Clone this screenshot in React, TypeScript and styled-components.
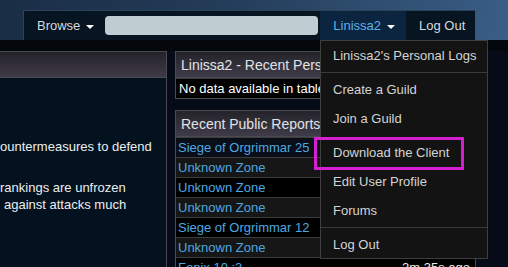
import styled, { createGlobalStyle } from 'styled-components'

const GlobalStyle = createGlobalStyle`
    html, body {
        margin: 0;
        padding: 0;
        background: #050b14;
    }
    body {
        font-family: "Liberation Sans", Arial, sans-serif;
    }
`

type Report = {
    zone: string
    time: string
    bg: string
}

const reports: Report[] = [
    { zone: 'Siege of Orgrimmar 25', time: '1m 2s ago', bg: '#0a0e19' },
    { zone: 'Unknown Zone', time: '1m 10s ago', bg: '#161616' },
    { zone: 'Unknown Zone', time: '1m 24s ago', bg: '#000000' },
    { zone: 'Unknown Zone', time: '1m 40s ago', bg: '#161616' },
    { zone: 'Siege of Orgrimmar 12', time: '2m 3s ago', bg: '#000000' },
    { zone: 'Unknown Zone', time: '2m 20s ago', bg: '#161616' },
    { zone: 'Fonix 10 :3', time: '2m 35s ago', bg: '#000000' },
]

const Page = styled.div`
    position: relative;
    width: 508px;
    height: 267px;
    overflow: hidden;
    background: #050c18;
    font-size: 13px;
`

const Header = styled.div`
    height: 40px;
    box-sizing: border-box;
    padding: 10px 0 0 23px;
    background: linear-gradient(100deg, #1a2d45 0%, #243d5a 45%, #3a5e86 100%);
`

const NavBar = styled.div`
    display: flex;
    align-items: stretch;
    width: 452px;
    height: 30px;
    background: #061521;
    border-top: 1px solid #2c4256;
    border-left: 1px solid #2c4256;
    box-sizing: border-box;
`

const NavItem = styled.div<{ $active?: boolean }>`
    display: flex;
    flex: none;
    align-items: center;
    gap: 6px;
    padding: 0 11px 0 13px;
    color: ${p => (p.$active ? '#5fb2e8' : '#d6dade')};
    background: ${p => (p.$active ? '#0b2440' : 'transparent')};
    white-space: nowrap;
`

const Caret = styled.span`
    width: 0;
    height: 0;
    border-left: 4px solid transparent;
    border-right: 4px solid transparent;
    border-top: 4px solid #ffffff;
    margin-top: 2px;
`

const SearchBox = styled.div`
    align-self: center;
    flex: none;
    width: 213px;
    height: 19px;
    margin-right: 2px;
    border-radius: 4px;
    background: #bdcdd2;
`

const Band = styled.div`
    height: 11px;
    background: #04080c;
`

const Content = styled.div`
    display: grid;
    grid-template-columns: 167px 301px;
    column-gap: 8px;
    height: 216px;
`

const Panel = styled.div`
    border: 1px solid #4a4a52;
    border-bottom: none;
    display: flex;
    flex-direction: column;
    overflow: hidden;
`

const LeftPanel = styled(Panel)`
    border-left: none;
    background: #03121e;
`

const PanelHeader = styled.div`
    height: 26px;
    box-sizing: border-box;
    display: flex;
    align-items: center;
    padding-left: 5px;
    font-size: 14px;
    color: #e2e2e6;
    white-space: nowrap;
    background: linear-gradient(180deg, #242329 0%, #3f3b49 100%);
    border-bottom: 1px solid #4a4a52;
`

const PanelBody = styled.div`
    padding-top: 60px;
    color: #eceef0;
    line-height: 17px;
`

const TextLine = styled.div<{ $indent?: number }>`
    white-space: nowrap;
    padding-left: ${p => p.$indent ?? 0}px;
`

const Spacer = styled.div`
    height: 24px;
`

const RightColumn = styled.div`
    display: flex;
    flex-direction: column;
    gap: 11px;
`

const Table = styled(Panel)`
    border-bottom: 1px solid #4a4a52;
    background: #000000;
`

const TableRow = styled.div<{ $bg: string }>`
    display: flex;
    justify-content: space-between;
    align-items: center;
    height: 20px;
    box-sizing: border-box;
    padding: 0 5px 0 2px;
    background: ${p => p.$bg};
    border-top: 1px solid #3c3c3c;
    white-space: nowrap;
    &:first-of-type {
        border-top: none;
    }
`

const EmptyCell = styled.span`
    color: #ffffff;
    padding-left: 1px;
`

const ZoneCell = styled.span`
    color: #4ea8e0;
`

const TimeCell = styled.span`
    color: #ececec;
`

const Dropdown = styled.div`
    position: absolute;
    left: 320px;
    top: 40px;
    width: 168px;
    height: 219px;
    box-sizing: border-box;
    background: #131313;
    border: 1px solid #3e3e3e;
    display: flex;
    flex-direction: column;
`

const MenuItem = styled.div`
    height: 29px;
    flex-shrink: 0;
    display: flex;
    align-items: center;
    padding-left: 12px;
    color: #d4d4d4;
    white-space: nowrap;
`

const Divider = styled.div<{ $ghost?: boolean }>`
    height: 1px;
    margin: 2px 0;
    flex-shrink: 0;
    background: ${p => (p.$ghost ? 'transparent' : '#3a3a3a')};
`

const Highlight = styled.div`
    position: absolute;
    left: 314px;
    top: 137px;
    width: 150px;
    height: 33px;
    box-sizing: border-box;
    border: 3px solid #d61fcf;
`

const App = () => {
    return (
        <>
            <GlobalStyle />
            <Page>
                <Header>
                    <NavBar>
                        <NavItem>
                            Browse <Caret />
                        </NavItem>
                        <SearchBox />
                        <NavItem $active>
                            Linissa2 <Caret />
                        </NavItem>
                        <NavItem>Log Out</NavItem>
                    </NavBar>
                </Header>
                <Band />
                <Content>
                    <LeftPanel>
                        <PanelHeader />
                        <PanelBody>
                            <TextLine>ountermeasures to defend</TextLine>
                            <Spacer />
                            <TextLine>rankings are unfrozen</TextLine>
                            <TextLine $indent={4}>against attacks much</TextLine>
                        </PanelBody>
                    </LeftPanel>
                    <RightColumn>
                        <Table>
                            <PanelHeader>Linissa2 - Recent Personal Logs</PanelHeader>
                            <TableRow $bg="#000000">
                                <EmptyCell>No data available in table</EmptyCell>
                            </TableRow>
                        </Table>
                        <Table>
                            <PanelHeader>Recent Public Reports</PanelHeader>
                            {reports.map((r, i) => (
                                <TableRow key={i} $bg={r.bg}>
                                    <ZoneCell>{r.zone}</ZoneCell>
                                    <TimeCell>{r.time}</TimeCell>
                                </TableRow>
                            ))}
                        </Table>
                    </RightColumn>
                </Content>
                <Dropdown>
                    <MenuItem>Linissa2's Personal Logs</MenuItem>
                    <Divider />
                    <MenuItem>Create a Guild</MenuItem>
                    <MenuItem>Join a Guild</MenuItem>
                    <Divider $ghost />
                    <MenuItem>Download the Client</MenuItem>
                    <MenuItem>Edit User Profile</MenuItem>
                    <MenuItem>Forums</MenuItem>
                    <Divider />
                    <MenuItem>Log Out</MenuItem>
                </Dropdown>
                <Highlight />
            </Page>
        </>
    )
}

export default App
